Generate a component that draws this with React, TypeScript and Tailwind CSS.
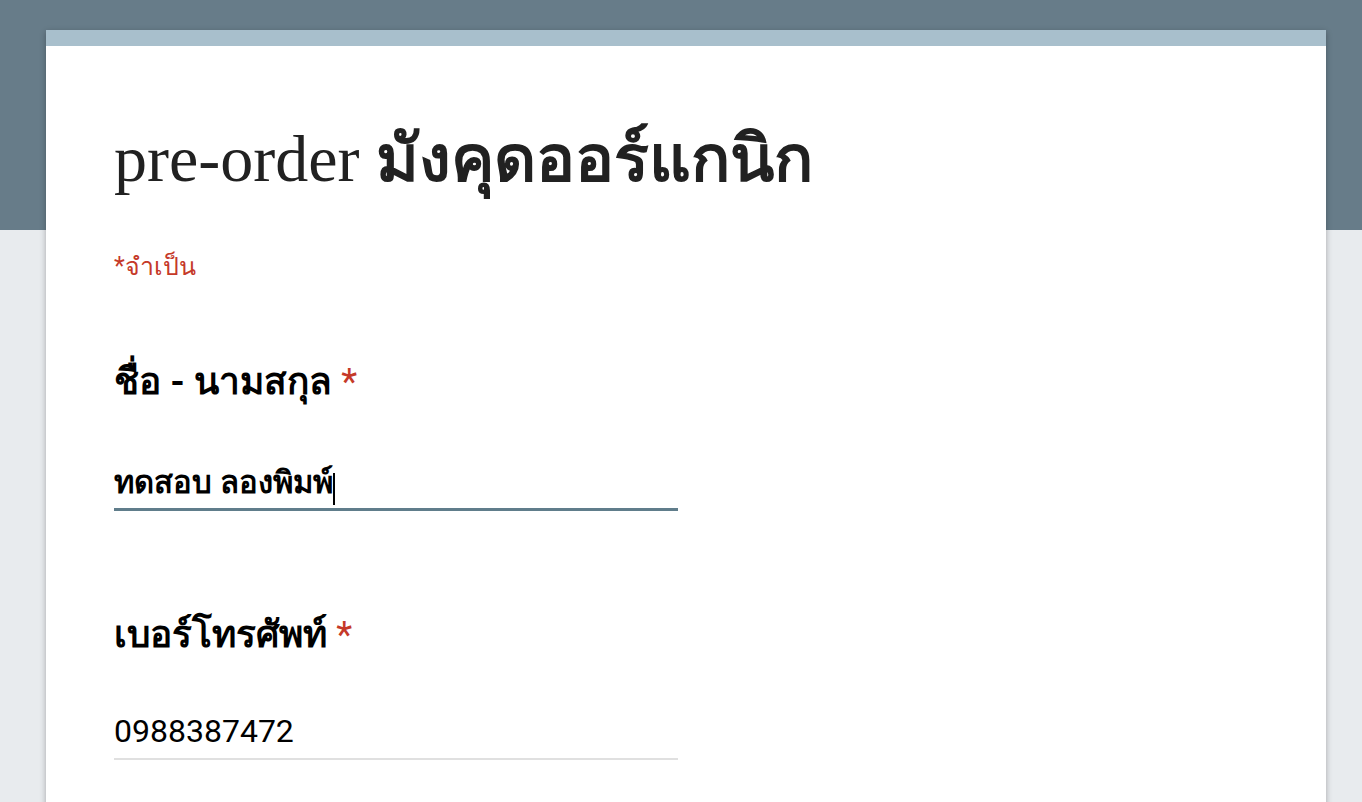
export default function App() {
  return (
    <div className="min-h-[802px] bg-[#e8ebee] relative overflow-hidden">
      <div className="h-[230px] bg-[#677c89]" />
      <div className="-mt-[200px] ml-[46px] w-[1280px] bg-white shadow-[0_2px_6px_rgba(0,0,0,0.3)] min-h-[800px]">
        <div className="h-4 bg-[#a8bfcc]" />
        <div className="px-[68px] pt-[70px]">
          <h1 className="text-[66px] leading-[80px] text-[#212121] font-['Liberation_Serif',serif]">
            pre-order <span className="text-[65px] font-bold font-['Noto_Sans',sans-serif]">มังคุดออร์แกนิก</span>
          </h1>
          <div className="mt-[52px] text-[25px] leading-8 text-[#c53929] font-['Roboto',sans-serif]">*จำเป็น</div>

          <div className="mt-[75px]">
            <div className="text-[37px] leading-[48px] font-bold text-black font-['Roboto',sans-serif]">
              ชื่อ - นามสกุล <span className="text-[#c53929] font-normal">*</span>
            </div>
            <div className="mt-[57px] w-[564px] border-b-[3px] border-[#607d8b] pb-[3px]">
              <span className="text-[31px] leading-[40px] font-bold text-black font-['Roboto',sans-serif]">
                ทดสอบ ลองพิมพ์
              </span>
              <span className="inline-block w-[2px] h-[32px] bg-black align-middle" />
            </div>
          </div>

          <div className="mt-[100px]">
            <div className="text-[37px] leading-[48px] font-bold text-black font-['Roboto',sans-serif]">
              เบอร์โทรศัพท์ <span className="text-[#c53929] font-normal">*</span>
            </div>
            <div className="mt-[52px] w-[564px] border-b-2 border-[#e0e0e0] pb-[7px]">
              <span className="text-[32px] leading-[40px] text-black font-['Roboto',sans-serif]">0988387472</span>
            </div>
          </div>
        </div>
      </div>
    </div>
  );
}
